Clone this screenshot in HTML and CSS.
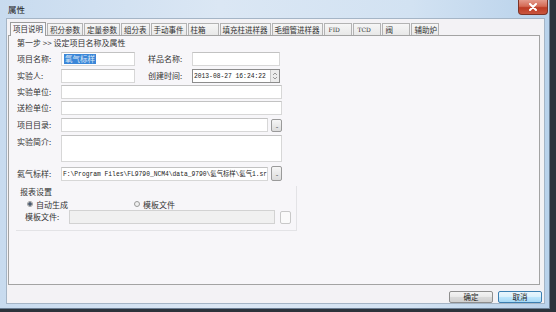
FILE: index.html
```html
<!DOCTYPE html>
<html lang="zh">
<head>
<meta charset="utf-8">
<title>属性</title>
<link rel="stylesheet" href="styles.css">
</head>
<body>
<div class="window">
  <div class="titlebar">
    <span class="title">属性</span>
    <div class="close">
      <svg width="10" height="8" viewBox="0 0 10 8"><path d="M2 1 L8 7 M8 1 L2 7" stroke="#fff" stroke-width="2" stroke-linecap="round"/></svg>
    </div>
  </div>
  <div class="client">
    <div class="tabs">
      <div class="tab active">项目说明</div>
      <div class="tab">积分参数</div>
      <div class="tab">定量参数</div>
      <div class="tab">组分表</div>
      <div class="tab">手动事件</div>
      <div class="tab t-zx">柱箱</div>
      <div class="tab">填充柱进样器</div>
      <div class="tab">毛细管进样器</div>
      <div class="tab t-en">FID</div>
      <div class="tab t-en">TCD</div>
      <div class="tab t-en t-cn">阀</div>
      <div class="tab t-en t-cn">辅助炉</div>
    </div>
    <div class="panel">
      <div class="step">第一步 &gt;&gt; 设定项目名称及属性</div>
      <div class="row r1">
        <span class="label">项目名称:</span>
        <div class="input w-short"><span class="sel">氧气标样</span></div>
        <span class="label lab2">样品名称:</span>
        <div class="input w-mid"></div>
      </div>
      <div class="row r2">
        <span class="label">实验人:</span>
        <div class="input w-short"></div>
        <span class="label lab2">创建时间:</span>
        <div class="input w-mid date"><span class="mono">2013-08-27 16:24:22</span><span class="spin"><svg width="6" height="8" viewBox="0 0 6 8"><path d="M1 3 L3 1 L5 3 M1 5 L3 7 L5 5" fill="none" stroke="#999" stroke-width="1"/></svg></span></div>
      </div>
      <div class="row r3">
        <span class="label">实验单位:</span>
        <div class="input w-long"></div>
      </div>
      <div class="row r4">
        <span class="label">送检单位:</span>
        <div class="input w-long"></div>
      </div>
      <div class="row r5">
        <span class="label">项目目录:</span>
        <div class="input w-dir"></div>
        <div class="browse">...</div>
      </div>
      <div class="row r6">
        <span class="label">实验简介:</span>
        <div class="input w-long area"></div>
      </div>
      <div class="row r7">
        <span class="label">氦气标样:</span>
        <div class="input w-dir path"><span class="mono">F:\Program Files\FL9790_NCM4\data_9790\氦气标样\氦气1.sr</span></div>
        <div class="browse">...</div>
      </div>
      <div class="group">
        <div class="legend">报表设置</div>
        <div class="radios">
          <span class="radio on"><span class="dot"></span>自动生成</span>
          <span class="radio"><span class="dot"></span>模板文件</span>
        </div>
        <div class="row r8">
          <span class="label">模板文件:</span>
          <div class="input w-tpl disabled"></div>
          <div class="browse small"></div>
        </div>
      </div>
    </div>
    <div class="buttons">
      <div class="btn">确定</div>
      <div class="btn default">取消</div>
    </div>
  </div>
</div>
</body>
</html>
```

FILE: styles.css
```css
* { box-sizing: border-box; }
html, body { margin: 0; padding: 0; }
body {
  width: 556px;
  height: 312px;
  background: #2c333b;
  font-family: "Noto Sans CJK SC", "Noto Sans", sans-serif;
  font-size: 8px;
  color: #333;
  overflow: hidden;
}
.window {
  width: 550px;
  height: 309px;
  background: linear-gradient(90deg, #c8dbef 0%, #dbe7f4 40%, #d2e2f2 75%, #b9d2eb 100%);
  border-right: 1px solid #6c7f94;
  border-bottom: 1px solid #6c7f94;
  padding: 0 4px 4px 6px;
  display: flex;
  flex-direction: column;
}
.titlebar {
  height: 18px;
  display: flex;
  align-items: flex-start;
  justify-content: space-between;
  flex: none;
}
.title {
  margin: 4px 0 0 2px;
  font-size: 8.5px;
  line-height: 10px;
  color: #222;
}
.close {
  width: 30px;
  height: 15px;
  margin-right: -3px;
  background: linear-gradient(180deg, #e49a8c 0%, #d46a55 45%, #bd3b25 55%, #c9563f 100%);
  border: 1px solid #7c3327;
  border-top: none;
  border-radius: 0 0 4px 4px;
  display: flex;
  align-items: center;
  justify-content: center;
}
.client {
  flex: 1;
  background: #f3f2f5;
  border: 1px solid #a5b5c6;
  padding: 2px 2px 0 1px;
  display: flex;
  flex-direction: column;
}
.tabs {
  display: flex;
  height: 14px;
  padding-left: 2px;
  align-items: flex-end;
  flex: none;
}
.tab {
  height: 12px;
  line-height: 11px;
  padding: 0 2px;
  border: 1px solid #b3b3b3;
  border-bottom: none;
  margin-right: 1px;
  background: linear-gradient(180deg, #f6f6f6, #e8e8e8);
  font-size: 7.5px;
  color: #333;
  white-space: nowrap;
}
.tab.active {
  height: 14px;
  line-height: 12px;
  background: #f8f7fa;
  border-color: #9c9c9c;
  margin-bottom: -1px;
  position: relative;
  z-index: 1;
}
.t-zx { padding-right: 12px; }
.t-en {
  width: 28px;
  font-family: "DejaVu Serif", serif;
  font-size: 6px;
  padding-left: 4px;
  color: #333;
}
.t-cn {
  font-family: "Noto Sans CJK SC", sans-serif;
  font-size: 7.5px;
  padding-left: 3px;
}
.panel {
  flex: none;
  height: 250px;
  margin-right: 2px;
  background: #f7f6f9;
  border: 1px solid #a3a3a3;
  padding: 0 0 0 8px;
}
.step {
  height: 11px;
  line-height: 11px;
  margin-top: 1px;
}
.row {
  display: flex;
  align-items: center;
  height: 14px;
}
.label {
  width: 44px;
  flex: none;
  line-height: 10px;
}
.lab2 { margin-left: 13px; }
.input {
  height: 14px;
  background: #fff;
  border: 1px solid #d7d7d7;
  border-top-color: #c2c2c2;
  flex: none;
  display: flex;
  align-items: center;
  overflow: hidden;
}
.w-short { width: 74px; }
.w-mid { width: 88px; }
.w-long { width: 221px; }
.w-dir { width: 207px; }
.w-tpl { width: 206px; }
.r1 { margin-top: 4px; }
.r2 { margin-top: 3px; }
.r3 { margin-top: 2px; }
.r4 { margin-top: 2px; }
.r5 { margin-top: 3px; }
.r6 { margin-top: 3px; height: 27px; align-items: flex-start; }
.r6 .label { margin-top: 2px; }
.area { height: 27px; }
.r7 { margin-top: 4px; height: 15px; }
.sel {
  margin-left: 2px;
  background: #3b86d8;
  color: #dbe9f7;
  line-height: 10px;
  padding: 0 1px;
  font-size: 7.5px;
}
.date {
  border: 1px solid #8c8c8c;
  justify-content: space-between;
  padding-left: 1px;
}
.mono {
  font-family: "Liberation Mono", "Noto Sans CJK SC", monospace;
  font-size: 6.3px;
  color: #222;
  white-space: nowrap;
}
.spin {
  width: 9px;
  height: 12px;
  border-left: 1px solid #c8c8c8;
  background: #ececec;
  display: flex;
  align-items: center;
  justify-content: center;
}
.path { padding-left: 1px; }
.browse {
  width: 11px;
  height: 13px;
  margin-left: 3px;
  border: 1px solid #9a9a9a;
  border-radius: 2px;
  background: linear-gradient(180deg, #f6f6f6, #dcdcdc);
  font-size: 6px;
  line-height: 12px;
  text-align: center;
  color: #555;
  letter-spacing: -1px;
}
.r7 .browse { height: 15px; line-height: 14px; }
.group {
  width: 281px;
  margin: 5px 0 0 -1px;
  border: 1px solid #e3e3e6;
  border-top: none;
  border-left: none;
  padding: 0 0 3px 4px;
  height: 45px;
}
.legend {
  line-height: 10px;
  padding-top: 1px;
}
.radios {
  display: flex;
  margin-top: 2px;
  padding-left: 7px;
  height: 10px;
  align-items: center;
}
.radio {
  display: flex;
  align-items: center;
  gap: 3px;
  width: 107px;
}
.dot {
  width: 6px;
  height: 6px;
  border-radius: 50%;
  border: 1px solid #9a9a9a;
  background: #f0f0f0;
}
.radio.on .dot {
  background: radial-gradient(circle, #4a5a70 0 1.5px, #e8e8e8 2px);
}
.r8 { margin-top: 1px; padding-left: 5px; }
.r8 .label { width: 44px; }
.disabled {
  background: #f0f0f0;
  border-color: #d2d2d2;
}
.browse.small {
  width: 11px;
  height: 13px;
  margin-left: 5px;
  border-color: #c8c8c8;
  background: #fafafa;
}
.buttons {
  flex: 1;
  display: flex;
  justify-content: flex-end;
  align-items: flex-start;
  padding-top: 6px;
  gap: 5px;
}
.btn {
  width: 44px;
  height: 12px;
  border: 1px solid #8e8e8e;
  border-radius: 2px;
  background: linear-gradient(180deg, #f4f4f4 0%, #e8e8e8 50%, #dadada 51%, #d0d0d0 100%);
  text-align: center;
  font-size: 7.5px;
  line-height: 10px;
  color: #222;
}
.btn.default {
  border-color: #3c7fb1;
  background: linear-gradient(180deg, #eaf6fd 0%, #d9f0fc 50%, #bee6fd 51%, #a7d9f5 100%);
}
```
